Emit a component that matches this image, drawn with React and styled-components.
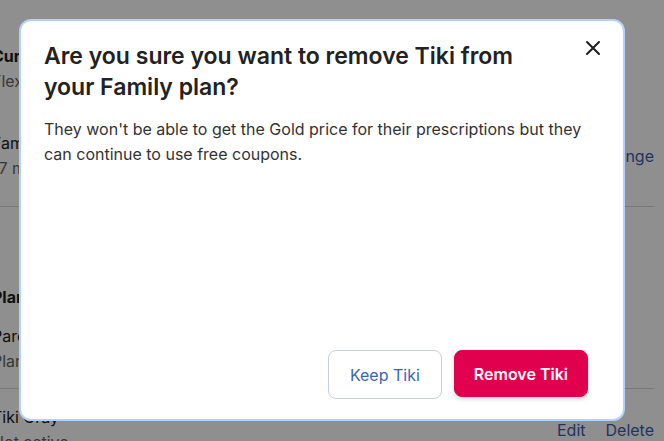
import React from 'react';
import styled, { createGlobalStyle } from 'styled-components';

const GlobalStyle = createGlobalStyle`
  html, body {
    margin: 0;
    padding: 0;
    background: #fff;
    font-family: Inter, "Liberation Sans", sans-serif;
    overflow: hidden;
  }
  #root {
    width: 664px;
    height: 441px;
    position: relative;
    overflow: hidden;
  }
`;

// ---- page behind the dialog ----
const Page = styled.div`
  width: 662px;
  margin-left: -8px;
  padding-top: 44px;
  color: #1b1b1b;
`;

const Section = styled.div`
  border-bottom: 1px solid #d8d8d8;
  padding: ${p => p.$pad || '0 0 36px'};
`;

const Row = styled.div`
  display: flex;
  align-items: center;
  justify-content: space-between;
  margin-top: ${p => p.$mt || 0}px;
`;

const Label = styled.div`
  font-size: 16px;
  line-height: 25px;
  font-weight: ${p => (p.$bold ? 700 : 400)};
  color: ${p => (p.$muted ? '#666' : '#1b1b1b')};
`;

const LinkGroup = styled.div`
  display: flex;
  gap: 20px;
  font-size: 16px;
  line-height: 25px;
  color: #3e5ca8;
`;

// ---- dialog ----
const Overlay = styled.div`
  position: absolute;
  inset: 0;
  background: rgba(0, 0, 0, 0.44);
  display: flex;
  align-items: flex-start;
  padding: 19px 0 0 19px;
`;

const Dialog = styled.div`
  position: relative;
  box-sizing: border-box;
  width: 606px;
  height: 402px;
  background: #fff;
  border: 2px solid #b5d1fb;
  border-radius: 12px;
  padding: 20px 35px 20px 23px;
  display: flex;
  flex-direction: column;
`;

const Title = styled.h2`
  margin: 0;
  width: 480px;
  font-size: 23px;
  line-height: 31px;
  font-weight: 600;
  color: #222;
`;

const Body = styled.p`
  margin: 14px 0 0;
  font-size: 16px;
  line-height: 25px;
  color: #333;
`;

const CloseButton = styled.button`
  position: absolute;
  top: 16px;
  right: 19px;
  width: 22px;
  height: 22px;
  padding: 0;
  border: none;
  background: none;
  display: flex;
  align-items: center;
  justify-content: center;
  cursor: pointer;
`;

const Actions = styled.div`
  margin-top: auto;
  display: flex;
  justify-content: flex-end;
  align-items: flex-start;
  gap: 12px;
`;

const Button = styled.button`
  box-sizing: border-box;
  height: ${p => (p.$primary ? 47 : 49)}px;
  padding: 0 ${p => (p.$primary ? 19 : 21)}px;
  border-radius: 8px;
  font-family: Inter, "Liberation Sans", sans-serif;
  font-size: 16px;
  font-weight: ${p => (p.$primary ? 600 : 400)};
  cursor: pointer;
  border: 1px solid ${p => (p.$primary ? '#e0004d' : '#c6cee2')};
  background: ${p => (p.$primary ? '#e0004d' : '#fff')};
  color: ${p => (p.$primary ? '#fff' : '#3d64b4')};
  box-shadow: ${p => (p.$primary ? '0 2px 4px rgba(0,0,0,0.18)' : 'none')};
`;

const CloseIcon = () => (
  <svg width="16" height="16" viewBox="0 0 16 16" fill="none">
    <path d="M2 2L14 14M14 2L2 14" stroke="#1e1e1e" strokeWidth="2" strokeLinecap="round" />
  </svg>
);

const App = () => {
  return (
    <>
      <GlobalStyle />
      <Page>
        <Section $pad="0 0 25px">
          <Label $bold>Current plan</Label>
          <Label $muted>Flex Gold</Label>
          <Row $mt={37}>
            <div>
              <Label>Family name</Label>
              <Label $muted>17 members max</Label>
            </div>
            <LinkGroup>Change</LinkGroup>
          </Row>
        </Section>
        <Section $pad="78px 0 14px">
          <Label $bold>Plan members</Label>
          <Row $mt={14}>
            <div>
              <Label>Parent</Label>
              <Label $muted>Plan owner</Label>
            </div>
          </Row>
        </Section>
        <Row $mt={16}>
          <div>
            <Label>Tiki Gray</Label>
            <Label $muted>Not active</Label>
          </div>
          <LinkGroup>
            <span>Edit</span>
            <span>Delete</span>
          </LinkGroup>
        </Row>
      </Page>

      <Overlay>
        <Dialog role="dialog">
          <Title>Are you sure you want to remove Tiki from your Family plan?</Title>
          <CloseButton aria-label="Close">
            <CloseIcon />
          </CloseButton>
          <Body>
            They won't be able to get the Gold price for their prescriptions but they can continue to use free coupons.
          </Body>
          <Actions>
            <Button>Keep Tiki</Button>
            <Button $primary>Remove Tiki</Button>
          </Actions>
        </Dialog>
      </Overlay>
    </>
  );
};

export default App;
